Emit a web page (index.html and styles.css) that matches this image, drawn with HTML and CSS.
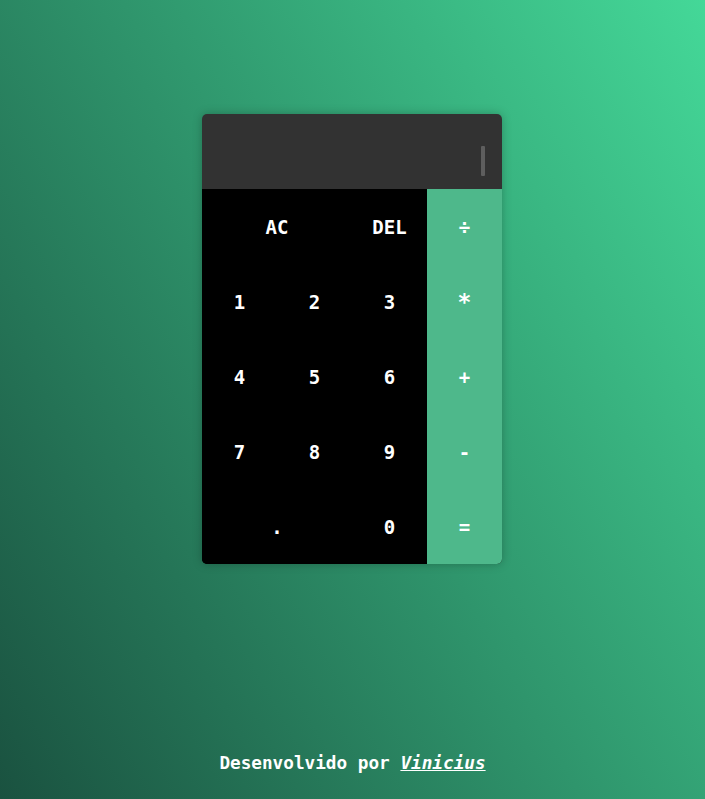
FILE: index.html
```html
<!DOCTYPE html>
<html lang="pt-BR">
<head>
<meta charset="utf-8">
<title>Calculadora</title>
<link rel="stylesheet" href="styles.css">
</head>
<body>
<main class="page">
  <div class="calculator">
    <div class="display"><span class="caret"></span></div>
    <div class="keys">
      <button class="key span-two">AC</button>
      <button class="key">DEL</button>
      <button class="key op">÷</button>
      <button class="key">1</button>
      <button class="key">2</button>
      <button class="key">3</button>
      <button class="key op star">*</button>
      <button class="key">4</button>
      <button class="key">5</button>
      <button class="key">6</button>
      <button class="key op">+</button>
      <button class="key">7</button>
      <button class="key">8</button>
      <button class="key">9</button>
      <button class="key op">-</button>
      <button class="key span-two">.</button>
      <button class="key">0</button>
      <button class="key op">=</button>
    </div>
  </div>
</main>
<footer class="footer">Desenvolvido por <a class="author" href="#">Vinicius</a></footer>
</body>
</html>
```

FILE: styles.css
```css
* { box-sizing: border-box; }
html, body { margin: 0; height: 100%; }
body {
  min-height: 100vh;
  display: flex;
  flex-direction: column;
  background: linear-gradient(60deg, #1a5240 0%, #44d898 100%);
  font-family: "DejaVu Sans Mono", "Liberation Mono", monospace;
  font-weight: bold;
  color: #fff;
}
.page {
  display: flex;
  justify-content: center;
  padding-top: 114px;
  padding-right: 1px;
  flex: 1;
}
.calculator {
  width: 300px;
  height: 450px;
  border-radius: 5px;
  overflow: hidden;
  box-shadow: 0 0 10px rgba(0, 0, 0, 0.25);
  display: flex;
  flex-direction: column;
}
.display {
  height: 75px;
  background: #323232;
  display: flex;
  justify-content: flex-end;
  align-items: flex-end;
  padding-right: 17px;
  padding-bottom: 13px;
}
.caret {
  width: 4px;
  height: 30px;
  background: #5e5e5e;
  border-radius: 1px;
}
.keys {
  flex: 1;
  display: grid;
  grid-template-columns: repeat(4, 75px);
  grid-auto-rows: 75px;
  background: #000;
}
.key {
  border: 0;
  background: #000;
  color: #fff;
  font-family: "DejaVu Sans Mono", "Liberation Mono", monospace;
  font-weight: bold;
  font-size: 19px;
  padding: 0;
  display: flex;
  align-items: center;
  justify-content: center;
}
.key.span-two { grid-column: span 2; }
.key.op { background: #4eb88b; }
.key.star { font-size: 23px; }
.footer {
  text-align: center;
  font-size: 17.7px;
  line-height: 24px;
  padding-bottom: 24px;
}
.author {
  color: #fff;
  font-style: italic;
  text-decoration: underline;
}
```
